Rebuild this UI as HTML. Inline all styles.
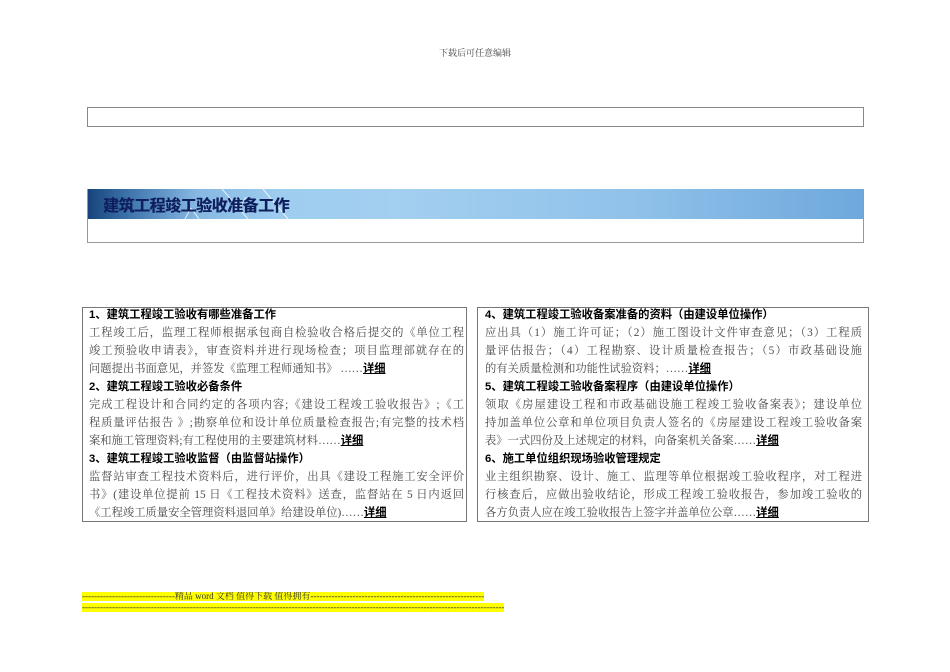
<!DOCTYPE html>
<html><head><meta charset="utf-8"><style>
body{margin:0;width:950px;height:672px;background:#fff;position:relative;overflow:hidden;font-family:"Liberation Serif","Noto Serif CJK SC","Noto Sans CJK SC",serif;}
.a{position:absolute}
.box{position:absolute;border:1px solid #777;box-sizing:border-box}
.l{position:absolute;font-size:11.3px;line-height:18px;height:18px;color:#4a4a4a;white-space:nowrap}
.j{text-align:justify;text-align-last:justify}
.h{font-weight:bold;color:#000;font-family:"Liberation Sans","Noto Sans CJK SC",sans-serif;font-size:11.3px}
u{color:#000;font-weight:bold;font-family:"Liberation Sans","Noto Sans CJK SC",sans-serif}
.y{position:absolute;background:#ffff00;font-size:9px;line-height:9px;height:9px;overflow:hidden;white-space:nowrap;color:#333}
</style></head><body>
<div class="a" style="left:0;width:950px;top:46px;text-align:center;font-size:9px;color:#444">下载后可任意编辑</div>
<div class="box" style="left:87px;top:107px;width:777px;height:20px;border-color:#888"></div>
<div class="box" style="left:87px;top:189px;width:777px;height:54px;border-color:#999"></div>
<div class="a" style="left:88px;top:189px;width:775px;height:30px;background:linear-gradient(90deg,#16447a 0%,#3c72aa 5%,#86b8e2 14%,#9ecdef 25%,#a3cff0 40%,#90c2ea 70%,#6ea8dc 100%)">
<svg width="775" height="30" style="position:absolute;left:0;top:0"><g stroke="#fff" stroke-width="1" fill="none" opacity=".8"><line x1="134" y1="0" x2="160" y2="30"/><line x1="175" y1="0" x2="200" y2="30"/><line x1="150" y1="22" x2="158" y2="8"/><line x1="97" y1="30" x2="103" y2="19"/><line x1="103" y1="19" x2="111" y2="30"/></g></svg>
<div class="a" style="left:15px;top:3px;font-family:'Liberation Sans','Noto Sans CJK SC',sans-serif;font-weight:bold;font-size:16px;color:#0f1f5e;letter-spacing:-0.5px;text-shadow:0.4px 0 0 #0f1f5e">建筑工程竣工验收准备工作</div>
</div>
<div class="box" style="left:82px;top:307px;width:385px;height:215px"></div>
<div class="box" style="left:477px;top:307px;width:392px;height:215px"></div>

<div class="l h" style="left:89px;top:306px">1、建筑工程竣工验收有哪些准备工作</div>
<div class="l j" style="left:89px;top:324px;width:375px">工程竣工后，监理工程师根据承包商自检验收合格后提交的《单位工程</div>
<div class="l j" style="left:89px;top:342px;width:375px">竣工预验收申请表》，审查资料并进行现场检查；项目监理部就存在的</div>
<div class="l" style="left:89px;top:360px">问题提出书面意见，并签发《监理工程师通知书》 ……<u>详细</u></div>
<div class="l h" style="left:89px;top:378px">2、建筑工程竣工验收必备条件</div>
<div class="l j" style="left:89px;top:396px;width:375px">完成工程设计和合同约定的各项内容;《建设工程竣工验收报告》;《工</div>
<div class="l j" style="left:89px;top:414px;width:375px">程质量评估报告 》;勘察单位和设计单位质量检查报告;有完整的技术档</div>
<div class="l" style="left:89px;top:432px">案和施工管理资料;有工程使用的主要建筑材料……<u>详细</u></div>
<div class="l h" style="left:89px;top:450px">3、建筑工程竣工验收监督（由监督站操作）</div>
<div class="l j" style="left:89px;top:468px;width:375px">监督站审查工程技术资料后，进行评价，出具《建设工程施工安全评价</div>
<div class="l j" style="left:89px;top:486px;width:375px">书》(建设单位提前 15 日《工程技术资料》送查，监督站在 5 日内返回</div>
<div class="l" style="left:89px;top:504px">《工程竣工质量安全管理资料退回单》给建设单位)……<u>详细</u></div>

<div class="l h" style="left:485px;top:306px">4、建筑工程竣工验收备案准备的资料（由建设单位操作）</div>
<div class="l j" style="left:485px;top:324px;width:377px">应出具（1）施工许可证；（2）施工图设计文件审查意见；（3）工程质</div>
<div class="l j" style="left:485px;top:342px;width:377px">量评估报告；（4）工程勘察、设计质量检查报告；（5）市政基础设施</div>
<div class="l" style="left:485px;top:360px">的有关质量检测和功能性试验资料；……<u>详细</u></div>
<div class="l h" style="left:485px;top:378px">5、建筑工程竣工验收备案程序（由建设单位操作）</div>
<div class="l j" style="left:485px;top:396px;width:377px">领取《房屋建设工程和市政基础设施工程竣工验收备案表》；建设单位</div>
<div class="l j" style="left:485px;top:414px;width:377px">持加盖单位公章和单位项目负责人签名的《房屋建设工程竣工验收备案</div>
<div class="l" style="left:485px;top:432px">表》一式四份及上述规定的材料，向备案机关备案……<u>详细</u></div>
<div class="l h" style="left:485px;top:450px">6、施工单位组织现场验收管理规定</div>
<div class="l j" style="left:485px;top:468px;width:377px">业主组织勘察、设计、施工、监理等单位根据竣工验收程序，对工程进</div>
<div class="l j" style="left:485px;top:486px;width:377px">行核查后，应做出验收结论，形成工程竣工验收报告，参加竣工验收的</div>
<div class="l" style="left:485px;top:504px">各方负责人应在竣工验收报告上签字并盖单位公章……<u>详细</u></div>

<div class="y" style="left:82px;top:592px;width:402px">-------------------------------精品 word 文档 值得下载 值得拥有----------------------------------------------------------------------------</div>
<div class="y" style="left:82px;top:603px;width:422px">--------------------------------------------------------------------------------------------------------------------------------------------------------------------------</div>
</body></html>
